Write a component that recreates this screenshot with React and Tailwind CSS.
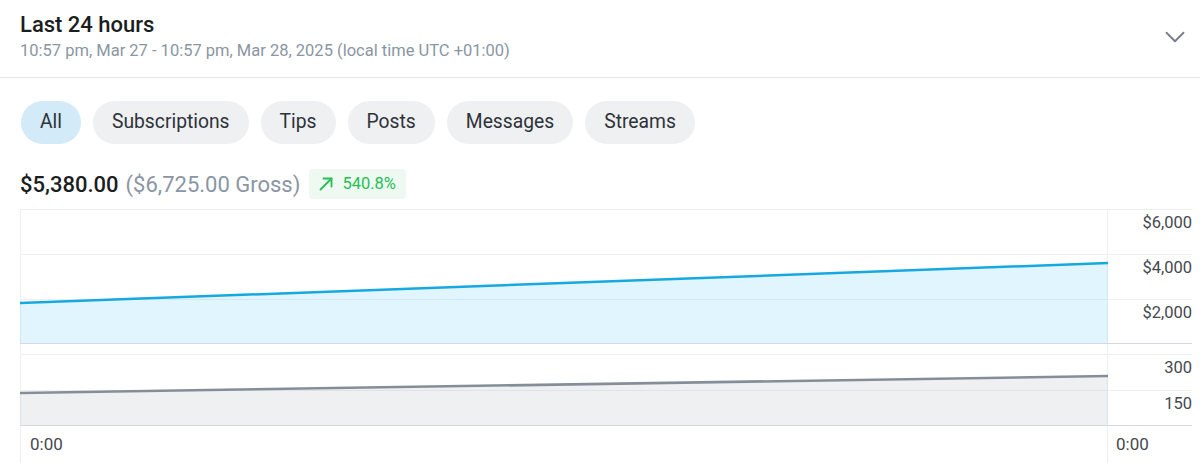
import { ChevronDown } from "lucide-react";

const tabs = ["All", "Subscriptions", "Tips", "Posts", "Messages", "Streams"];

// plot column is 1088px wide, labels take the rest
function Row({ label, h, top = true, children }) {
  return (
    <div className={`flex ${top ? "border-t border-[#eeeff1]" : ""}`} style={{ height: h }}>
      <div className="w-[1088px] border-l border-r border-[#eeeff1] relative">{children}</div>
      <div className="flex-1 text-right text-[16.5px] text-[#44494f] pt-[3px] leading-[20px]">{label}</div>
    </div>
  );
}

export default function App() {
  const [active, setActive] = [0, () => {}];

  return (
    <div className="w-[1200px] h-[463px] overflow-hidden bg-white font-['Roboto',sans-serif]">
      {/* Header */}
      <div className="flex items-center justify-between border-b border-[#e4e6e9] h-[78px] pl-[20px] pr-[8px]">
        <div className="pb-[4px]">
          <div className="text-[22px] leading-[26px] font-medium text-[#1b1d1f]">Last 24 hours</div>
          <div className="text-[16.5px] leading-[20px] mt-[3px] text-[#8a96a3]">
            10:57 pm, Mar 27 - 10:57 pm, Mar 28, 2025 (local time UTC +01:00)
          </div>
        </div>
        <ChevronDown className="w-[34px] h-[34px] text-[#737e89] mb-[4px]" strokeWidth={1.3} />
      </div>

      {/* Filter pills */}
      <div className="flex gap-[12px] pl-[21px] mt-[23px]">
        {tabs.map((t, i) => (
          <button
            key={t}
            onClick={() => setActive(i)}
            className={`h-[43px] px-[19px] rounded-full text-[19.3px] text-[#2d3339] ${
              i === active ? "bg-[#d3ebf8]" : "bg-[#eff0f2]"
            }`}
          >
            {t}
          </button>
        ))}
      </div>

      {/* Totals */}
      <div className="flex items-center pl-[20px] mt-[25px] h-[30px]">
        <span className="text-[22px] font-medium text-[#1b1d1f]">$5,380.00</span>
        <span className="text-[22px] text-[#8a96a3] ml-[7px]">($6,725.00 Gross)</span>
        <span className="ml-[9px] h-[30px] pl-[10px] pr-[10px] flex items-center gap-[9px] rounded bg-[#eefaf1] text-[16.5px] text-[#27be55]">
          <svg width="14" height="14" viewBox="0 0 14 14" fill="none" stroke="currentColor" strokeWidth="1.8" strokeLinecap="round" strokeLinejoin="round">
            <path d="M1.5 12.5 L12.5 1.5" />
            <path d="M4.5 1.5 H12.5 V9.5" />
          </svg>
          540.8%
        </span>
      </div>

      {/* Chart */}
      <div className="ml-[20px] w-[1172px] mt-[10px]">
        <div className="relative border-b border-[#d5d9dd]">
          <Row label="$6,000" h={45} />
          <Row label="$4,000" h={45} />
          <Row label="$2,000" h={44} />
          <svg className="absolute left-0 top-0" width="1088" height="134" viewBox="0 0 1088 134">
            <polygon points="0,94 1088,54 1088,134 0,134" fill="#38bdf8" fillOpacity="0.15" />
            <line x1="0" y1="94" x2="1088" y2="54" stroke="#16a8e0" strokeWidth="2.5" />
          </svg>
        </div>
        <Row h={10} top={false} />
        <div className="relative border-b border-[#d5d9dd]">
          <Row label="300" h={36} />
          <Row label="150" h={35} />
          <svg className="absolute left-0 top-0" width="1088" height="71" viewBox="0 0 1088 71">
            <polygon points="0,39 1088,22 1088,71 0,71" fill="#9ca3af" fillOpacity="0.16" />
            <line x1="0" y1="39" x2="1088" y2="22" stroke="#858e98" strokeWidth="2.5" />
          </svg>
        </div>
        <div className="flex h-[40px] text-[17px] text-[#44494f]">
          <div className="w-[1088px] border-l border-r border-[#eeeff1] pl-[9px] pt-[6px]">0:00</div>
          <div className="flex-1 pl-[8px] pt-[6px]">0:00</div>
        </div>
      </div>
    </div>
  );
}
